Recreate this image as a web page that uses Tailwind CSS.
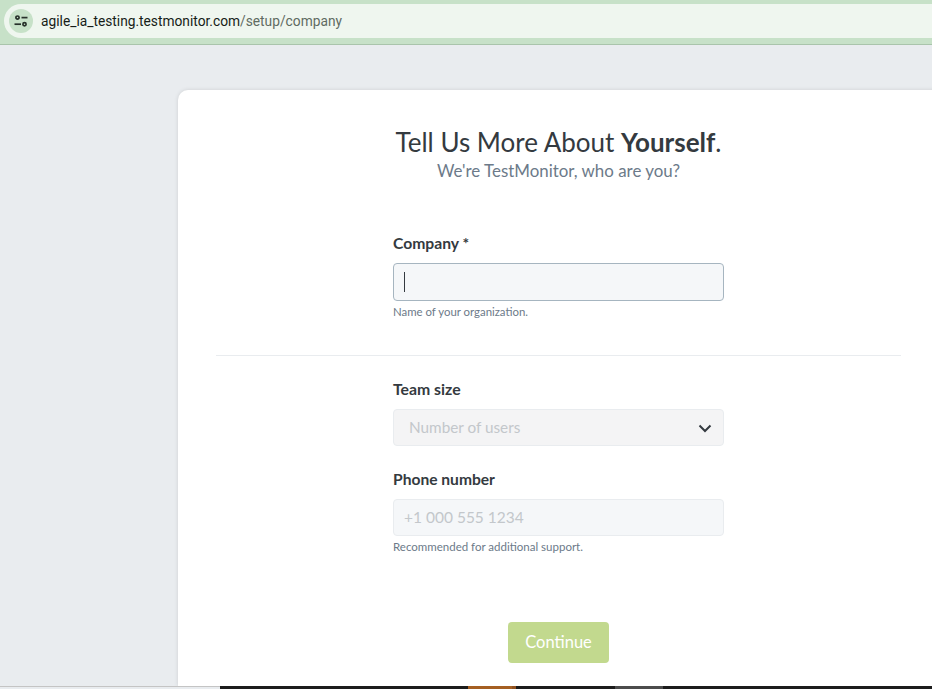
<!DOCTYPE html>
<html lang="en">
<head>
    <meta charset="UTF-8" />
    <title>TestMonitor setup</title>
    <script src="https://cdn.jsdelivr.net/npm/@tailwindcss/browser@4"></script>
</head>
<body class="h-[689px] overflow-hidden bg-[#e9ecef] font-['Lato','Noto_Sans',sans-serif] flex flex-col">
    <!-- browser address bar -->
    <div class="h-[45px] shrink-0 bg-[#c7e1c8] border-b border-[#a9c4ab] pt-[4px] pl-[4px]">
        <div class="h-[34px] bg-[#eff6ef] rounded-l-full flex items-center pl-[5px]">
            <div class="w-[24px] h-[24px] rounded-full bg-[#c7e1c8] flex items-center justify-center">
                <svg width="16" height="16" viewBox="0 0 16 16" fill="none" stroke="#27302a" stroke-width="1.7">
                    <circle cx="4.5" cy="4.6" r="1.6"/>
                    <path d="M8.5 4.6h6"/>
                    <circle cx="11.5" cy="11.2" r="1.6"/>
                    <path d="M1.5 11.2h6.5"/>
                </svg>
            </div>
            <p class="ml-[8px] text-[13.75px] font-['Roboto',sans-serif] text-[#161d18]">agile_ia_testing.testmonitor.com<span class="text-[#5f6b62]">/setup/company</span></p>
        </div>
    </div>

    <!-- page -->
    <div class="flex-1 pl-[178px] pt-[45px] overflow-hidden">
        <div class="h-[596px] bg-white rounded-tl-[10px] shadow-[0_0_4px_rgba(0,0,0,0.12)] px-[38px] pt-[36px] flex flex-col items-center w-[761px]">
            <h1 class="text-[26px] leading-[32px] text-[#343a40] text-center">Tell Us More About <span class="font-bold">Yourself</span>.</h1>
            <p class="text-[16.9px] leading-[24px] text-[#6c7a89] text-center mt-[1px]">We're TestMonitor, who are you?</p>

            <div class="w-[331px] mt-[50px]">
                <label class="block text-[15.7px] leading-[20px] font-bold text-[#343a40]">Company *</label>
                <div class="mt-[10px] h-[38px] bg-[#f5f7f9] border border-[#a6b5c0] rounded-[4px] flex items-center pl-[10px]">
                    <div class="w-px h-[20px] bg-[#343a40]"></div>
                </div>
                <p class="mt-[3px] text-[11.4px] leading-[16px] text-[#6c7a89]">Name of your organization.</p>
            </div>

            <div class="w-full h-px bg-[#e9ecef] mt-[35px]"></div>

            <div class="w-[331px] mt-[23px]">
                <label class="block text-[15.8px] leading-[20px] font-bold text-[#343a40]">Team size</label>
                <div class="mt-[10px] h-[37px] bg-[#f4f4f5] border border-[#e9ecef] rounded-[4px] flex items-center justify-between pl-[15px] pr-[10px]">
                    <span class="text-[15.3px] text-[#c3c7cb]">Number of users</span>
                    <svg width="16" height="16" viewBox="0 0 16 16" fill="none" stroke="#343a40" stroke-width="2"><path d="M2.5 5.5 8 11l5.5-5.5"/></svg>
                </div>
                <label class="block mt-[23px] text-[15.6px] leading-[20px] font-bold text-[#343a40]">Phone number</label>
                <div class="mt-[10px] h-[37px] bg-[#f5f7f9] border border-[#e9ecef] rounded-[4px] flex items-center pl-[10px]">
                    <span class="text-[15.5px] text-[#c3c7cb]">+1 000 555 1234</span>
                </div>
                <p class="mt-[3px] text-[11.5px] leading-[16px] text-[#6c7a89]">Recommended for additional support.</p>
            </div>

            <button class="mt-[67px] w-[101px] h-[41px] rounded-[4px] bg-[#c2d98e] text-white text-[16.5px] text-center">Continue</button>
        </div>
    </div>

    <!-- taskbar strip at the bottom edge -->
    <div class="h-[3px] shrink-0 flex bg-[#1c1c1c]">
        <div class="w-[220px] bg-[#e9ecef] border-t border-[#c4c4c4]"></div>
        <div class="w-[248px]"></div>
        <div class="w-[44px] bg-[#a55f22]"></div>
        <div class="w-[4px] bg-[#8f5120]"></div>
        <div class="w-[99px]"></div>
        <div class="w-[48px] bg-[#4c4c4c]"></div>
    </div>
</body>
</html>
